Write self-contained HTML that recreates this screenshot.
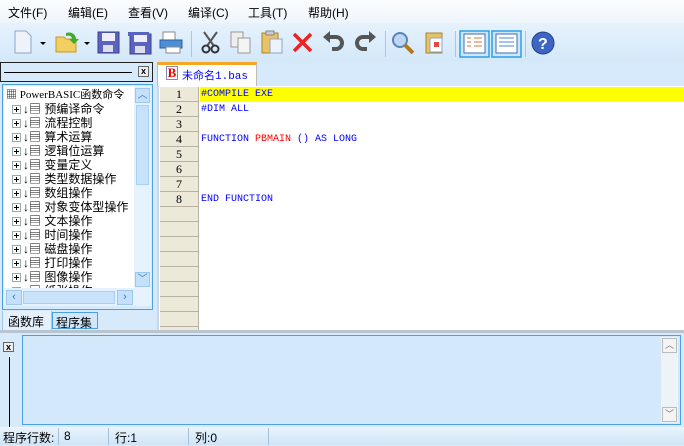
<!DOCTYPE html>
<html><head><meta charset="utf-8">
<style>
*{margin:0;padding:0;box-sizing:border-box}
body{width:684px;height:445px;overflow:hidden;background:#d6eafb;font-family:"Liberation Sans","Noto Sans CJK SC",sans-serif;font-size:12px;color:#000;position:relative}
.a{position:absolute}
#menu{left:0;top:0;width:684px;height:23px;background:linear-gradient(#fbfdff,#eef5fc)}
#menu span{position:absolute;top:4px;font-size:12px}
#tb{left:0;top:23px;width:684px;height:39px;background:linear-gradient(#e6f2fd,#d3e8fa)}
.sep{position:absolute;top:8px;width:1px;height:26px;background:#a9c6e2}
.tree div{position:absolute;left:8px;height:14px;line-height:14px;white-space:nowrap;font-size:12px}
.pl{display:inline-block;width:9px;height:9px;border:1px solid #9aa;vertical-align:middle;margin-right:2px;position:relative;background:#fff}
.pl:before{content:"";position:absolute;left:1px;top:3px;width:5px;height:1px;background:#000}
.pl:after{content:"";position:absolute;left:3px;top:1px;width:1px;height:5px;background:#000}
.gut div{position:absolute;left:0;width:38px;height:15px;border-bottom:1px solid #b8b0a0;text-align:center;font-family:"Liberation Serif",serif;font-size:12px;line-height:14px}
.code div{position:absolute;left:0;height:15px;line-height:16px;font-family:"Liberation Mono",monospace;font-size:10px;white-space:pre;color:#00f}
.r{color:#f00}
</style></head><body>
<div id="menu" class="a">
<span style="left:8px">文件(F)</span><span style="left:68px">编辑(E)</span><span style="left:128px">查看(V)</span><span style="left:188px">编译(C)</span><span style="left:248px">工具(T)</span><span style="left:308px">帮助(H)</span>
</div>
<div id="tb" class="a">
<svg class="a" style="left:0;top:0" width="684" height="39">
<path d="M15 8h11l5 5v17H15z" fill="#eef3fb" stroke="#8ea6c8"/><path d="M40 19h6l-3 3z" fill="#000"/>
<path d="M56 14h8l2 2h10v13H56z" fill="#f3cf62" stroke="#c7962a"/><path d="M66 10c6-2 10 2 10 6l3 0-5 5-5-5 3 0c0-3-3-4-6-3z" fill="#3eac2c"/><path d="M84 19h6l-3 3z" fill="#000"/>
<rect x="98" y="9" width="21" height="21" fill="#5b63c0" stroke="#3a3f8e"/><rect x="102" y="10" width="13" height="8" fill="#eef"/><rect x="103" y="22" width="10" height="7" fill="#dde"/>
<rect x="130" y="11" width="21" height="20" fill="#5b63c0" stroke="#3a3f8e"/><rect x="128" y="9" width="21" height="4" fill="#5b63c0"/><rect x="134" y="12" width="13" height="7" fill="#eef"/><rect x="135" y="23" width="10" height="7" fill="#dde"/>
<rect x="163" y="9" width="12" height="8" fill="#fff" stroke="#888"/><path d="M160 17h22v8h-22z" fill="#4b8fd6" stroke="#2b5f9e"/><rect x="166" y="24" width="14" height="6" fill="#fff" stroke="#888"/>
<path d="M204 9l10 14M217 9l-10 14" stroke="#555" stroke-width="2"/><circle cx="206" cy="26" r="3.5" fill="none" stroke="#333" stroke-width="2"/><circle cx="215" cy="26" r="3.5" fill="none" stroke="#333" stroke-width="2"/>
<rect x="231" y="9" width="12" height="15" fill="#eee" stroke="#999"/><rect x="238" y="15" width="12" height="15" fill="#f4f4f4" stroke="#999"/>
<rect x="262" y="10" width="16" height="20" fill="#e8c266" stroke="#a68530"/><rect x="266" y="8" width="8" height="4" fill="#ccc" stroke="#888"/><rect x="270" y="16" width="12" height="14" fill="#eef3fb" stroke="#8ea6c8"/>
<path d="M294 11l17 17M311 11l-17 17" stroke="#e22" stroke-width="3.5"/>
<path d="M327 14h9a6 6 0 0 1 0 12h-4" fill="none" stroke="#555" stroke-width="4"/><path d="M323 14l7-6v12z" fill="#555"/>
<path d="M372 14h-9a6 6 0 0 0 0 12h4" fill="none" stroke="#555" stroke-width="4"/><path d="M376 14l-7-6v12z" fill="#555"/>
<circle cx="400" cy="17" r="7" fill="#bcd6f3" stroke="#5b83b8" stroke-width="2"/><path d="M405 22l8 8" stroke="#b07a20" stroke-width="4"/>
<rect x="426" y="10" width="16" height="20" fill="#e8c266" stroke="#a68530"/><rect x="430" y="15" width="12" height="14" fill="#fff" stroke="#8ea6c8"/><rect x="434" y="19" width="5" height="5" fill="#e44"/>
<rect x="460" y="8" width="29" height="26" fill="#cfe6fb" stroke="#2aa0e6" stroke-width="1.5"/><rect x="464" y="11" width="21" height="19" fill="#fff" stroke="#3b6fb6"/><path d="M467 15h4M467 19h4M467 23h4M474 15h8M474 19h8M474 23h8" stroke="#e07040"/>
<rect x="492" y="8" width="29" height="26" fill="#cfe6fb" stroke="#2aa0e6" stroke-width="1.5"/><rect x="496" y="11" width="21" height="19" fill="#fff" stroke="#3b6fb6"/><path d="M499 15h15M499 19h15M499 23h15" stroke="#4a8ad0"/>
<circle cx="543" cy="20" r="11" fill="#3d66c4" stroke="#24408e"/><text x="538" y="26" fill="#fff" font-family="Liberation Sans" font-weight="bold" font-size="16">?</text>
</svg>
<div class="sep" style="left:191px"></div><div class="sep" style="left:385px"></div><div class="sep" style="left:455px"></div><div class="sep" style="left:525px"></div>
</div>

<div class="a" style="left:0;top:62px;width:153px;height:20px;border:1px solid #222;background:#d6eafb"></div>
<div class="a" style="left:4px;top:72px;width:128px;height:1px;background:#000"></div>
<div class="a" style="left:138px;top:66px;width:11px;height:11px;border:1px solid #666;background:#eee;font-size:9px;line-height:9px;text-align:center;font-weight:bold">x</div>
<div class="a" style="left:2px;top:84px;width:151px;height:226px;border:1px solid #4aa0e0;background:#d6eafb"></div>
<div class="a tree" style="left:4px;top:86px;width:130px;height:202px;background:#fff;overflow:hidden">
<div style="top:2px;left:2px;font-family:'Liberation Serif','Noto Sans CJK SC',serif;font-size:11px">▦ PowerBASIC函数命令</div>
<div style="top:16px"><span class="pl"></span>↓▤ 预编译命令</div>
<div style="top:30px"><span class="pl"></span>↓▤ 流程控制</div>
<div style="top:44px"><span class="pl"></span>↓▤ 算术运算</div>
<div style="top:58px"><span class="pl"></span>↓▤ 逻辑位运算</div>
<div style="top:72px"><span class="pl"></span>↓▤ 变量定义</div>
<div style="top:86px"><span class="pl"></span>↓▤ 类型数据操作</div>
<div style="top:100px"><span class="pl"></span>↓▤ 数组操作</div>
<div style="top:114px"><span class="pl"></span>↓▤ 对象变体型操作</div>
<div style="top:128px"><span class="pl"></span>↓▤ 文本操作</div>
<div style="top:142px"><span class="pl"></span>↓▤ 时间操作</div>
<div style="top:156px"><span class="pl"></span>↓▤ 磁盘操作</div>
<div style="top:170px"><span class="pl"></span>↓▤ 打印操作</div>
<div style="top:184px"><span class="pl"></span>↓▤ 图像操作</div>
<div style="top:198px"><span class="pl"></span>↓▤ 纸张操作</div>
</div>
<div class="a" style="left:134px;top:86px;width:17px;height:202px;background:#e6f2fd"></div>
<div class="a" style="left:135px;top:88px;width:15px;height:15px;background:#c4e0fa;border:1px solid #9cc8ee;color:#3a7cc4;font-size:10px;text-align:center;line-height:13px">︿</div>
<div class="a" style="left:136px;top:105px;width:13px;height:80px;background:#c8e2fa;border:1px solid #a8d0f2"></div>
<div class="a" style="left:135px;top:272px;width:15px;height:15px;background:#c4e0fa;border:1px solid #9cc8ee;color:#3a7cc4;font-size:10px;text-align:center;line-height:13px">﹀</div>
<div class="a" style="left:4px;top:288px;width:147px;height:18px;background:#e6f2fd"></div>
<div class="a" style="left:6px;top:290px;width:16px;height:15px;background:#c4e0fa;border:1px solid #9cc8ee;color:#3a7cc4;font-size:11px;text-align:center;line-height:13px">‹</div>
<div class="a" style="left:23px;top:291px;width:92px;height:13px;background:#c8e2fa;border:1px solid #a8d0f2"></div>
<div class="a" style="left:117px;top:290px;width:16px;height:15px;background:#c4e0fa;border:1px solid #9cc8ee;color:#3a7cc4;font-size:11px;text-align:center;line-height:13px">›</div>
<div class="a" style="left:2px;top:311px;width:50px;height:20px;background:#e4f1fc;border:1px solid #9cc8ee;border-top:none;padding:2px 0 0 5px">函数库</div>
<div class="a" style="left:52px;top:312px;width:46px;height:17px;background:#cfe6fb;border:1px solid #4aa0e0;padding:1px 0 0 3px">程序集</div>

<div class="a" style="left:157px;top:62px;width:100px;height:24px;background:#fff;border:1px solid #bbb;border-top:3px solid #f5a623;border-bottom:none"></div>
<div class="a" style="left:166px;top:66px;width:12px;height:14px;background:#fff;border:1px solid #88a;color:#e00;font-weight:bold;font-family:'Liberation Serif',serif;font-size:13px;line-height:12px;text-align:center">B</div>
<div class="a" style="left:182px;top:67px;color:#00f;font-family:'Liberation Mono','Noto Sans CJK SC',monospace;font-size:11px">未命名1.bas</div>
<div class="a" style="left:157px;top:86px;width:527px;height:244px;background:#fff;border-left:2px solid #c8d8e8"></div>
<div class="a gut" style="left:160px;top:87px;width:39px;height:243px;background:#ece9d8;border-right:1px solid #b8b0a0">
<div style="top:0">1</div><div style="top:15px">2</div><div style="top:30px">3</div><div style="top:45px">4</div><div style="top:60px">5</div><div style="top:75px">6</div><div style="top:90px">7</div><div style="top:105px">8</div><div style="top:120px"></div><div style="top:135px"></div><div style="top:150px"></div><div style="top:165px"></div><div style="top:180px"></div><div style="top:195px"></div><div style="top:210px"></div><div style="top:225px"></div>
</div>
<div class="a code" style="left:200px;top:87px;width:484px;height:240px">
<div style="top:0;width:484px;background:#ffff00;padding-left:1px" class="r">#COMPILE EXE</div>
<div style="top:15px;padding-left:1px" class="r">#DIM ALL</div>
<div style="top:45px;padding-left:1px">FUNCTION <span class="r">PBMAIN</span> () AS LONG</div>
<div style="top:105px;padding-left:1px">END FUNCTION</div>
</div>
<div class="a" style="left:0;top:330px;width:684px;height:3px;background:#b9c4cf"></div>

<div class="a" style="left:3px;top:342px;width:11px;height:10px;border:1px solid #666;background:#eee;font-size:9px;line-height:8px;text-align:center;font-weight:bold">x</div>
<div class="a" style="left:9px;top:357px;width:1px;height:70px;background:#000"></div>
<div class="a" style="left:22px;top:335px;width:659px;height:90px;background:#d3e9fb;border:1px solid #4aa0e0"></div>
<div class="a" style="left:661px;top:337px;width:17px;height:86px;background:#eef3f7"></div>
<div class="a" style="left:662px;top:338px;width:15px;height:15px;background:#f4f4f4;border:1px solid #bbb;color:#777;font-size:9px;text-align:center;line-height:13px">︿</div>
<div class="a" style="left:662px;top:407px;width:15px;height:15px;background:#f4f4f4;border:1px solid #bbb;color:#777;font-size:9px;text-align:center;line-height:13px">﹀</div>
<div class="a" style="left:0;top:427px;width:684px;height:18px;background:linear-gradient(#eaf4fd,#cfe5f8)"></div>
<div class="a" style="left:3px;top:429px">程序行数:</div>
<div class="a" style="left:58px;top:428px;width:1px;height:17px;background:#a8c0d8"></div>
<div class="a" style="left:64px;top:429px">8</div>
<div class="a" style="left:108px;top:428px;width:1px;height:17px;background:#a8c0d8"></div>
<div class="a" style="left:115px;top:429px">行:1</div>
<div class="a" style="left:188px;top:428px;width:1px;height:17px;background:#a8c0d8"></div>
<div class="a" style="left:195px;top:429px">列:0</div>
<div class="a" style="left:268px;top:428px;width:1px;height:17px;background:#a8c0d8"></div>
</body></html>
